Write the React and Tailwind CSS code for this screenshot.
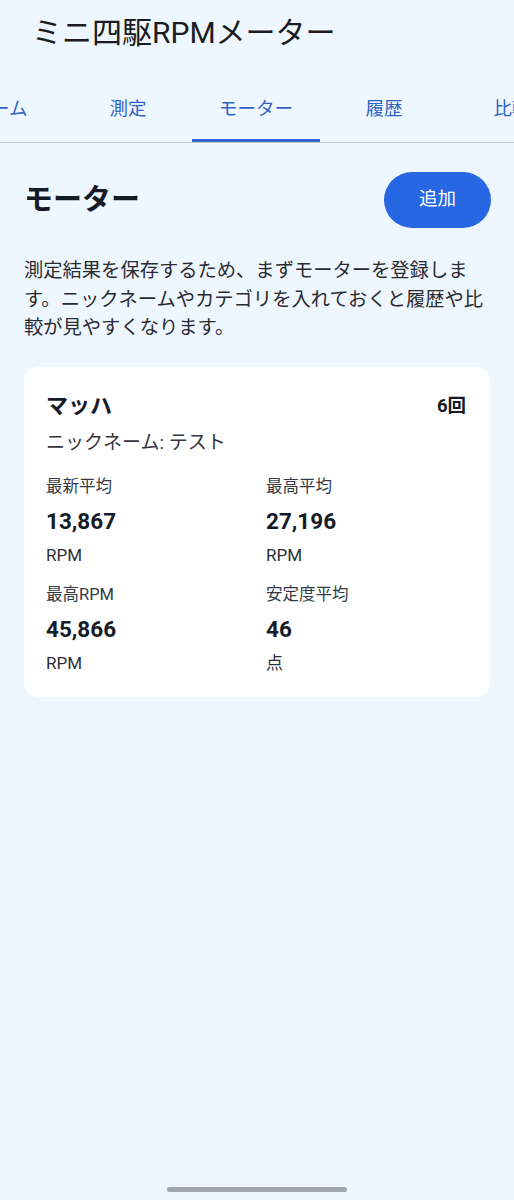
import React from "react";

const font = { fontFamily: '"Roboto", "Noto Sans CJK JP", sans-serif' };

const tabs = ["ホーム", "測定", "モーター", "履歴", "比較"];

function Stat({ label, value, unit }) {
  return (
    <div className="flex flex-col">
      <div className="text-[16.5px] leading-[24px] text-[#333a45]">{label}</div>
      <div className="mt-2 text-[22.5px] leading-[28px] font-bold text-[#151b27]">{value}</div>
      <div className="mt-2 text-[17px] leading-[24px] text-[#2a2f38]">{unit}</div>
    </div>
  );
}

export default function App() {
  return (
    <div className="min-h-[1200px] w-[514px] bg-[#eef6ff] flex flex-col relative overflow-hidden" style={font}>
      <div className="pt-[15px] px-8 text-[30px] leading-[36px] text-[#1b1c20]">ミニ四駆RPMメーター</div>

      <div className="mt-[24px] border-b border-[#c6cad3] overflow-hidden">
        <div className="flex -ml-[64px]">
          {tabs.map((t) => {
            const active = t === "モーター";
            return (
              <div key={t} className="w-[128px] shrink-0 flex flex-col items-center">
                <div className="pt-5 pb-4 text-[18.5px] leading-[28px] text-[#2f63c4]">{t}</div>
                <div className={active ? "h-[3px] w-full bg-[#2f66d6]" : "h-[3px] w-full"} />
              </div>
            );
          })}
        </div>
      </div>

      <div className="px-6 pt-[29px] flex flex-col">
        <div className="flex items-center justify-between">
          <div className="text-[29px] leading-[36px] font-bold text-[#141a26]">モーター</div>
          <button className="h-14 w-[107px] -mr-px rounded-full bg-[#2767e3] text-white text-[18.5px]">追加</button>
        </div>

        <p className="mt-[29px] text-[19.3px] leading-[28.5px] text-[#2a2b30]">
          測定結果を保存するため、まずモーターを登録します。ニックネームやカテゴリを入れておくと履歴や比較が見やすくなります。
        </p>

        <div className="mt-6 bg-white rounded-[14px] pt-6 pb-[22px] pl-[22px] pr-6 flex flex-col">
          <div className="flex items-center justify-between">
            <div className="text-[22px] leading-[30px] font-bold text-[#141a26]">マッハ</div>
            <div className="text-[18.5px] leading-[30px] font-bold text-[#141a26]">6回</div>
          </div>
          <div className="mt-2 text-[19px] leading-[27px] text-[#34363b]">ニックネーム: テスト</div>
          <div className="mt-[19px] grid grid-cols-2 gap-x-5 gap-y-4">
            <Stat label="最新平均" value="13,867" unit="RPM" />
            <Stat label="最高平均" value="27,196" unit="RPM" />
            <Stat label="最高RPM" value="45,866" unit="RPM" />
            <Stat label="安定度平均" value="46" unit="点" />
          </div>
        </div>
      </div>

      <div className="absolute left-[167px] top-[1187px] h-[5px] w-[180px] rounded-full bg-[#a2a6ad]" />
    </div>
  );
}
